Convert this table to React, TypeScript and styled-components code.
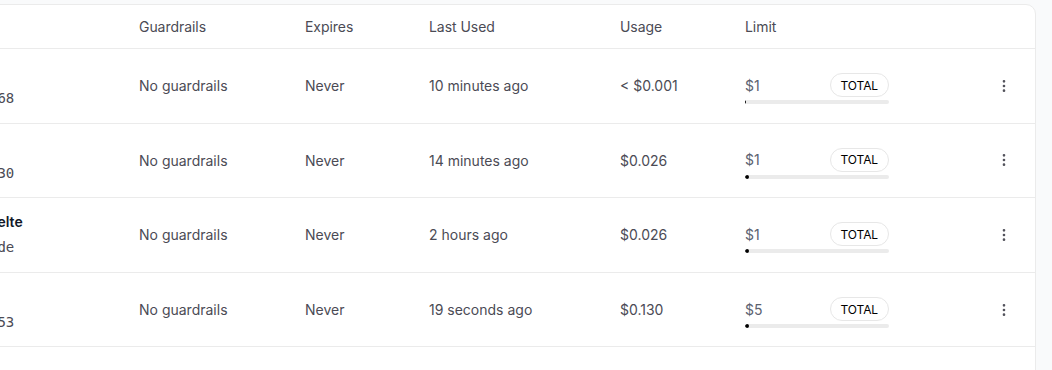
import React from "react";
import styled, { createGlobalStyle } from "styled-components";
import { EllipsisVertical } from "lucide-react";

const GlobalStyle = createGlobalStyle`
  html, body { margin: 0; padding: 0; }
  body {
    background: #f9fafb;
    font-family: Inter, "Noto Sans", sans-serif;
    overflow: hidden;
    -webkit-font-smoothing: antialiased;
  }
`;

const COLUMNS = "268px 166px 124px 191px 125px 176px 1fr";

const Page = styled.div`
  width: 1052px;
  height: 370px;
  padding-top: 4px;
  box-sizing: border-box;
  overflow: hidden;
`;

const Card = styled.div`
  margin-left: -146px;
  margin-right: 16px;
  background: #ffffff;
  border: 1px solid #ebebeb;
  border-radius: 10px;
  overflow: hidden;
`;

const HeaderRow = styled.div`
  display: grid;
  grid-template-columns: ${COLUMNS};
  height: 44px;
  box-sizing: border-box;
  border-bottom: 1px solid #ebebeb;
  align-items: center;
`;

const HeadCell = styled.div`
  padding: 0 16px;
  font-size: 14px;
  color: #4b4b55;
  letter-spacing: -0.05px;
`;

const Row = styled.div`
  display: grid;
  grid-template-columns: ${COLUMNS};
  height: 74.6px;
  box-sizing: border-box;
  border-bottom: 1px solid #ebebeb;
  align-items: center;
`;

const Cell = styled.div`
  padding: 0 16px;
  font-size: 14px;
  color: #4b4b55;
  white-space: nowrap;
`;

const NameCell = styled.div`
  padding: 0 16px;
  display: flex;
  flex-direction: column;
  gap: 5px;
  white-space: nowrap;
`;

const KeyName = styled.div`
  font-size: 14px;
  line-height: 20px;
  font-weight: 600;
  color: #111827;
`;

const KeyHash = styled.div`
  font-family: "DejaVu Sans Mono", monospace;
  font-size: 14px;
  line-height: 20px;
  color: #4b4b55;
`;

const LimitCell = styled.div`
  padding: 6px 16px 0;
  display: flex;
  flex-direction: column;
  gap: 3px;
`;

const LimitTop = styled.div`
  width: 144px;
  display: flex;
  align-items: center;
  justify-content: space-between;
`;

const LimitAmount = styled.span`
  font-size: 14px;
  color: #5b6270;
`;

const Pill = styled.span`
  height: 24px;
  box-sizing: border-box;
  padding: 0 10px;
  display: inline-flex;
  align-items: center;
  border: 1px solid #e7e7e7;
  border-radius: 999px;
  font-size: 12px;
  font-weight: 400;
  color: #000000;
  letter-spacing: -0.1px;
`;

const Bar = styled.div`
  width: 144px;
  height: 4px;
  border-radius: 999px;
  background: #ebebeb;
  overflow: hidden;
`;

const BarFill = styled.div`
  height: 100%;
  border-radius: 999px;
  background: #000000;
`;

const ActionCell = styled.div`
  display: flex;
  justify-content: flex-end;
  padding-right: 15px;
`;

const IconButton = styled.button`
  width: 32px;
  height: 32px;
  display: flex;
  align-items: center;
  justify-content: center;
  border: none;
  background: transparent;
  color: #52525b;
  padding: 0;
  cursor: pointer;
`;

type KeyRow = {
  name: string;
  hash: string;
  lastUsed: string;
  usage: string;
  used: number;
  limit: number;
};

const rows: KeyRow[] = [
  { name: "Chat app", hash: "sk-or-v1-a0...468", lastUsed: "10 minutes ago", usage: "< $0.001", used: 0.0008, limit: 1 },
  { name: "Playground", hash: "sk-or-v1-3b...f30", lastUsed: "14 minutes ago", usage: "$0.026", used: 0.026, limit: 1 },
  { name: "Docs Assistant: Svelte", hash: "sk-or-v1-9c...0de", lastUsed: "2 hours ago", usage: "$0.026", used: 0.026, limit: 1 },
  { name: "CLI tool", hash: "sk-or-v1-e5...753", lastUsed: "19 seconds ago", usage: "$0.130", used: 0.13, limit: 5 },
  { name: "Staging", hash: "sk-or-v1-7f...a12", lastUsed: "3 days ago", usage: "$0.004", used: 0.004, limit: 1 },
];

export default function App() {
  return (
    <>
      <GlobalStyle />
      <Page>
        <Card>
          <HeaderRow>
            <HeadCell>Name</HeadCell>
            <HeadCell>Guardrails</HeadCell>
            <HeadCell>Expires</HeadCell>
            <HeadCell>Last Used</HeadCell>
            <HeadCell>Usage</HeadCell>
            <HeadCell>Limit</HeadCell>
            <HeadCell />
          </HeaderRow>
          {rows.map((r) => (
            <Row key={r.hash}>
              <NameCell>
                <KeyName>{r.name}</KeyName>
                <KeyHash>{r.hash}</KeyHash>
              </NameCell>
              <Cell>No guardrails</Cell>
              <Cell>Never</Cell>
              <Cell>{r.lastUsed}</Cell>
              <Cell>{r.usage}</Cell>
              <LimitCell>
                <LimitTop>
                  <LimitAmount>${r.limit}</LimitAmount>
                  <Pill>TOTAL</Pill>
                </LimitTop>
                <Bar>
                  <BarFill style={{ width: `${Math.max(1, (r.used / r.limit) * 144)}px` }} />
                </Bar>
              </LimitCell>
              <ActionCell>
                <IconButton aria-label="More actions">
                  <EllipsisVertical size={16} strokeWidth={2} />
                </IconButton>
              </ActionCell>
            </Row>
          ))}
        </Card>
      </Page>
    </>
  );
}
